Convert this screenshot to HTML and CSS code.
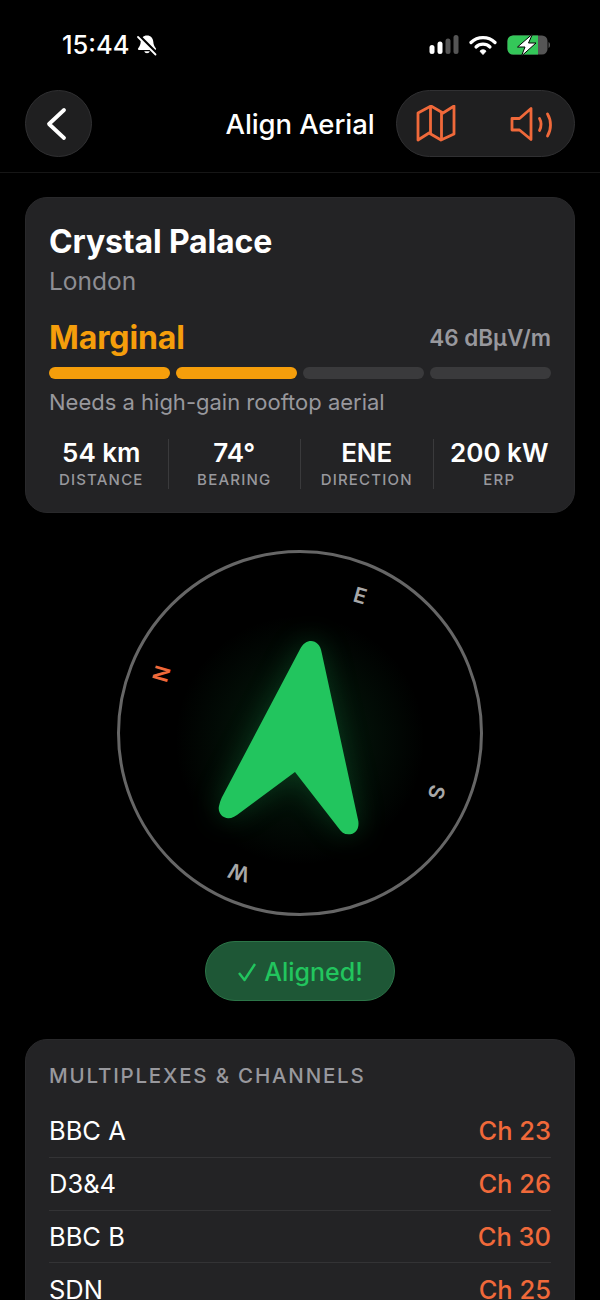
FILE: index.html
```html
<!DOCTYPE html>
<html lang="en">
<head>
    <meta charset="UTF-8">
    <meta name="viewport" content="width=device-width, initial-scale=1.0">
    <title>Align Aerial</title>
    <link rel="stylesheet" href="styles.css">
</head>
<body>
    <div class="status-bar">
        <div class="status-left">
            <span class="time">15:44</span>
            <svg class="bell" width="22" height="22" viewBox="0 0 22 22">
                <path d="M11 1.500c-3.800 0-6 2.700-6.300 6.300-.2 2.800-.9 4.700-2.500 6.400-.6.700-.2 1.800.8 1.800h16c1 0 1.400-1.100.8-1.800-1.600-1.700-2.300-3.600-2.500-6.400C17 4.200 14.800 1.500 11 1.500z" fill="#fff"/>
                <path d="M8.200 17.200a2.900 2.900 0 0 0 5.600 0z" fill="#fff"/>
                <path d="M1.500 0.500L21 20" stroke="#000" stroke-width="3.400"/>
                <path d="M2 3L19.500 20.500" stroke="#fff" stroke-width="1.800" stroke-linecap="round"/>
            </svg>
        </div>
        <div class="status-right">
            <svg width="30" height="22" viewBox="0 0 30 22">
                <rect x="0.500" y="11" width="5" height="9" rx="2.500" fill="#fff"/>
                <rect x="8.500" y="7.500" width="5" height="12.500" rx="2.500" fill="#fff"/>
                <rect x="16.500" y="4.500" width="5" height="15.500" rx="2.500" fill="#555"/>
                <rect x="24.500" y="1" width="5" height="19" rx="2.500" fill="#555"/>
            </svg>
            <svg width="28" height="22" viewBox="0 0 28 22">
                <path d="M2 8.500a17 17 0 0 1 24 0" fill="none" stroke="#fff" stroke-width="3.200" stroke-linecap="round"/>
                <path d="M7 13a10 10 0 0 1 14 0" fill="none" stroke="#fff" stroke-width="3.200" stroke-linecap="round"/>
                <path d="M11 17.200a4 4 0 0 1 6 0L14 20.500z" fill="#fff" stroke="#fff" stroke-width="1" stroke-linejoin="round"/>
            </svg>
            <svg width="43" height="22" viewBox="0 0 43 22">
                <rect x="0.500" y="1.500" width="40" height="19" rx="5.500" fill="#555"/>
                <path d="M6 1.500H31v19H6a5.500 5.500 0 0 1-5.500-5.500V7A5.500 5.500 0 0 1 6 1.500z" fill="#34c759"/>
                <path d="M41.500 8c1 .4 1.500 1.500 1.500 3s-.5 2.600-1.500 3z" fill="#555"/>
                <path d="M25.500 0L10.500 13h7.500L14.500 22 29 9h-7.500z" fill="#fff" stroke="#000" stroke-width="1"/>
            </svg>
        </div>
    </div>

    <header class="nav-bar">
        <button class="back-btn">
            <svg width="28" height="36" viewBox="0 0 28 36">
                <path d="M21 4L6 18l15 14" fill="none" stroke="#fff" stroke-width="3.800" stroke-linecap="round" stroke-linejoin="round"/>
            </svg>
        </button>
        <h1 class="nav-title">Align Aerial</h1>
        <div class="nav-actions">
            <svg width="40" height="38" viewBox="0 0 40 38">
                <path d="M2 8l13-7 12 7 11-7v28l-13 6-12-7-11 7z" fill="none" stroke="#f0693a" stroke-width="2.800" stroke-linejoin="round"/>
                <path d="M14.500 1.500v26.500M25.500 8v27" fill="none" stroke="#f0693a" stroke-width="2.800"/>
            </svg>
            <svg width="44" height="38" viewBox="0 0 44 38">
                <path d="M2 13.500h7.500L21 3.500v31L9.500 25H2z" fill="none" stroke="#f0693a" stroke-width="2.800" stroke-linejoin="round"/>
                <path d="M29.500 13.500c2 3.500 2 8 0 12M37.500 9c4 6.500 4 15.500 0 22" fill="none" stroke="#f0693a" stroke-width="2.800" stroke-linecap="round"/>
            </svg>
        </div>
    </header>

    <main class="content">
        <section class="card">
            <h2 class="site-name">Crystal Palace</h2>
            <p class="site-area">London</p>

            <div class="signal-head">
                <span class="signal-label">Marginal</span>
                <span class="signal-value">46 dBµV/m</span>
            </div>
            <div class="signal-bars">
                <span class="bar bar-on"></span>
                <span class="bar bar-on"></span>
                <span class="bar"></span>
                <span class="bar"></span>
            </div>
            <p class="signal-note">Needs a high-gain rooftop aerial</p>

            <div class="stats">
                <div class="stat">
                    <div class="stat-value">54 km</div>
                    <div class="stat-label">DISTANCE</div>
                </div>
                <div class="stat">
                    <div class="stat-value">74°</div>
                    <div class="stat-label">BEARING</div>
                </div>
                <div class="stat">
                    <div class="stat-value">ENE</div>
                    <div class="stat-label">DIRECTION</div>
                </div>
                <div class="stat">
                    <div class="stat-value">200 kW</div>
                    <div class="stat-label">ERP</div>
                </div>
            </div>
        </section>

        <div class="compass">
            <span class="cardinal cardinal-n">N</span>
            <span class="cardinal cardinal-e">E</span>
            <span class="cardinal cardinal-s">S</span>
            <span class="cardinal cardinal-w">W</span>
            <svg class="arrow" width="144" height="198" viewBox="0 0 144 198">
                <path d="M83 9.300C86 3.500 90 1 94 1c5 0 9.500 4 10.700 11.700L141.300 181c1.200 8-3 13.300-10 13.300-4 0-7.300-2.300-10-6.600L78 132 23 172.700c-4 3.500-8 5.600-11.700 5.600C5 178.300 .5 172 2 166c.6-3 1.500-5.500 2.700-8.300z" fill="#22c55e"/>
            </svg>
        </div>

        <div class="aligned-pill">
            <svg width="20" height="20" viewBox="0 0 20 20">
                <path d="M2 11l5.500 7L18 2" fill="none" stroke="#22c55e" stroke-width="2.400" stroke-linejoin="round"/>
            </svg>
            <span>Aligned!</span>
        </div>

        <section class="card card-list">
            <h3 class="list-title">MULTIPLEXES &amp; CHANNELS</h3>
            <div class="mux-row"><span>BBC A</span><span class="mux-ch">Ch 23</span></div>
            <div class="mux-row"><span>D3&amp;4</span><span class="mux-ch">Ch 26</span></div>
            <div class="mux-row"><span>BBC B</span><span class="mux-ch">Ch 30</span></div>
            <div class="mux-row"><span>SDN</span><span class="mux-ch">Ch 25</span></div>
        </section>
    </main>
</body>
</html>
```

FILE: styles.css
```css
* {
    margin: 0;
    padding: 0;
    box-sizing: border-box;
}

html, body {
    height: 1300px;
    overflow: hidden;
}

body {
    font-family: Inter, "Liberation Sans", sans-serif;
    background: #000;
    color: #fff;
}

.status-bar {
    height: 90px;
    padding: 31px 50px 0 62px;
    display: flex;
    justify-content: space-between;
    align-items: flex-start;
}

.status-left {
    display: flex;
    align-items: center;
    gap: 6px;
}

.time {
    font-size: 25.500px;
    font-weight: 500;
    line-height: 28px;
}

.status-right {
    display: flex;
    align-items: center;
    gap: 10px;
    padding-top: 3px;
}

.status-right svg {
    display: block;
}

.nav-bar {
    height: 83px;
    padding: 0 25px 16px;
    display: grid;
    grid-template-columns: 1fr auto 1fr;
    align-items: center;
    border-bottom: 1px solid #161616;
}

.back-btn {
    width: 67px;
    height: 67px;
    border-radius: 50%;
    background: #1f1f20;
    border: 1px solid #303032;
    display: flex;
    align-items: center;
    justify-content: center;
    padding-right: 4px;
}

.nav-title {
    font-size: 27.500px;
    font-weight: 500;
    letter-spacing: -0.1px;
}

.nav-actions {
    justify-self: end;
    width: 179px;
    height: 67px;
    border-radius: 34px;
    background: #1f1f20;
    border: 1px solid #303032;
    display: flex;
    align-items: center;
    justify-content: space-between;
    padding: 0 20px 0 19px;
}

.content {
    padding: 24px 25px 0;
}

.card {
    background: #232325;
    border: 1px solid #29292b;
    border-radius: 22px;
    padding: 24px 23px 23px;
}

.site-name {
    font-size: 32px;
    font-weight: 700;
    line-height: 40px;
    letter-spacing: -0.15px;
}

.site-area {
    font-size: 24.500px;
    line-height: 38px;
    color: #8e8e93;
}

.signal-head {
    margin-top: 15px;
    height: 44px;
    display: flex;
    justify-content: space-between;
    align-items: center;
}

.signal-label {
    font-size: 32px;
    font-weight: 700;
    letter-spacing: -0.1px;
    color: #f59e0b;
}

.signal-value {
    font-size: 22.500px;
    font-weight: 600;
    color: #98989d;
}

.signal-bars {
    margin-top: 8px;
    display: grid;
    grid-template-columns: repeat(4, 1fr);
    gap: 6px;
}

.bar {
    height: 12px;
    border-radius: 6px;
    background: #3a3a3c;
}

.bar-on {
    background: #f59e0b;
}

.signal-note {
    margin-top: 7px;
    font-size: 22px;
    line-height: 32px;
    color: #98989d;
}

.stats {
    margin: 21px -14px 0;
    display: grid;
    grid-template-columns: repeat(4, 1fr);
}

.stat {
    height: 50px;
    text-align: center;
    border-left: 1px solid #3a3a3c;
}

.stat:first-child {
    border-left: none;
}

.stat-value {
    font-size: 26px;
    font-weight: 600;
    line-height: 28px;
}

.stat-label {
    margin-top: 3px;
    font-size: 15px;
    font-weight: 500;
    line-height: 20px;
    letter-spacing: 1.200px;
    color: #98989d;
}

.compass {
    position: relative;
    width: 366px;
    height: 366px;
    margin: 37px auto 0;
    border: 3px solid #666;
    border-radius: 50%;
    background: radial-gradient(circle at 50% 52%, rgba(34, 197, 94, 0.15) 0, rgba(34, 197, 94, 0.07) 70px, rgba(34, 197, 94, 0) 125px);
}

.arrow {
    position: absolute;
    left: 97px;
    top: 87px;
    overflow: visible;
    filter: drop-shadow(0 0 14px rgba(34, 197, 94, 0.22));
}

.cardinal {
    position: absolute;
    width: 24px;
    height: 24px;
    line-height: 24px;
    text-align: center;
    font-size: 21px;
    font-weight: 600;
    color: #a8a8a8;
}

.cardinal-n {
    left: 30px;
    top: 109px;
    color: #f0693a;
    transform: rotate(-74deg);
}

.cardinal-e {
    left: 228px;
    top: 31px;
    transform: rotate(16deg);
}

.cardinal-s {
    left: 304px;
    top: 227px;
    transform: rotate(106deg);
}

.cardinal-w {
    left: 107px;
    top: 307px;
    transform: rotate(196deg);
}

.aligned-pill {
    width: 190px;
    height: 60px;
    margin: 25px auto 0;
    padding-top: 2px;
    border-radius: 30px;
    background: #1e5736;
    border: 1px solid #2c7548;
    color: #22c55e;
    font-size: 25px;
    font-weight: 500;
    display: flex;
    align-items: center;
    justify-content: center;
    gap: 7px;
}

.card-list {
    margin-top: 38px;
    padding-top: 22px;
}

.list-title {
    font-size: 20.500px;
    font-weight: 500;
    line-height: 28px;
    letter-spacing: 1.800px;
    color: #98989d;
    margin-bottom: 15px;
}

.mux-row {
    height: 52.800px;
    display: flex;
    justify-content: space-between;
    align-items: center;
    font-size: 25.500px;
    border-bottom: 1px solid #333335;
}

.mux-ch {
    color: #f0693a;
    font-weight: 500;
}
```
